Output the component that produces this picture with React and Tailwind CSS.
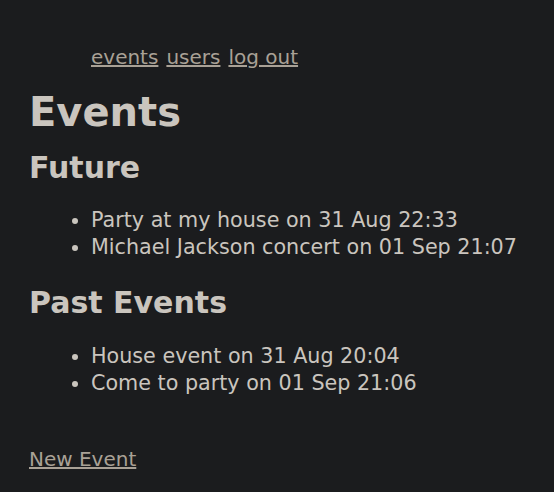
export default function App() {
  return (
    <div className="min-h-[492px] bg-[#1b1c1e] text-[#cac5be] pl-[29px] pt-[44px] font-['DejaVu_Sans',sans-serif] text-[20px] leading-[27px]">
      <nav className="pl-[62px] flex gap-[8px] text-[#a9a196]">
        <a href="#" className="underline">events</a>
        <a href="#" className="underline">users</a>
        <a href="#" className="underline">log out</a>
      </nav>
      <h1 className="mt-[17px] text-[40px] leading-[48px] font-bold">Events</h1>
      <h2 className="mt-[14px] text-[30px] leading-[36px] font-bold">Future</h2>
      <ul className="mt-[21px] pl-[62px] list-disc text-[20.7px]">
        <li>Party at my house on 31 Aug 22:33</li>
        <li>Michael Jackson concert on 01 Sep 21:07</li>
      </ul>
      <h2 className="mt-[24px] text-[30px] leading-[36px] font-bold">Past Events</h2>
      <ul className="mt-[22px] pl-[62px] list-disc text-[20.7px]">
        <li>House event on 31 Aug 20:04</li>
        <li>Come to party on 01 Sep 21:06</li>
      </ul>
      <div className="mt-[49px]">
        <a href="#" className="underline text-[#a9a196]">New Event</a>
      </div>
    </div>
  );
}
